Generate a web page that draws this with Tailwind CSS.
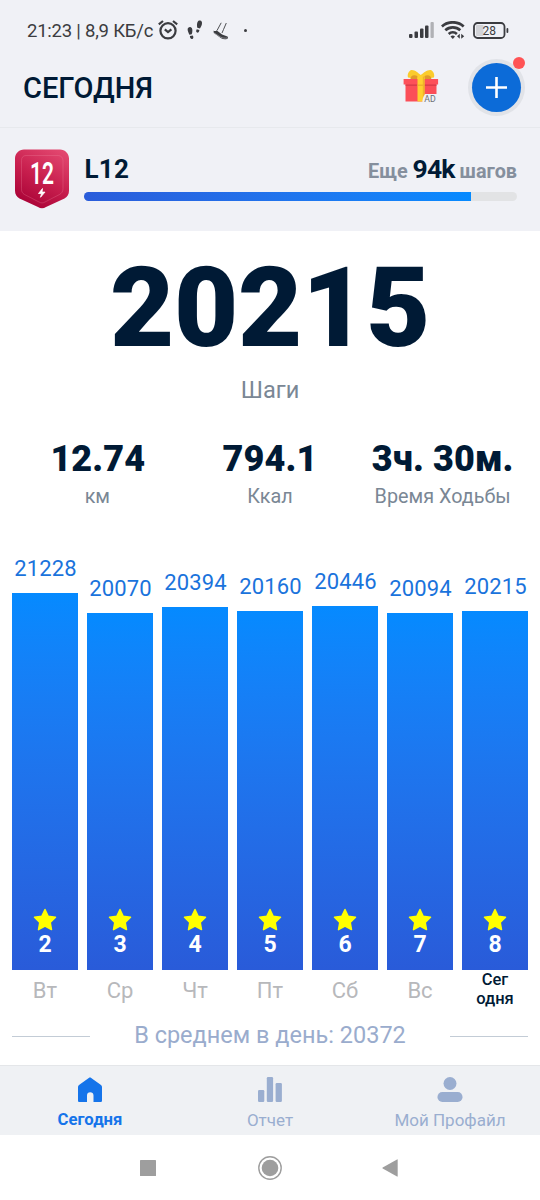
<!DOCTYPE html>
<html lang="ru">
<head>
  <meta charset="UTF-8" />
  <meta name="viewport" content="width=device-width, initial-scale=1.0"/>
  <title>Сегодня</title>
  <script src="https://cdn.jsdelivr.net/npm/@tailwindcss/browser@4"></script>
</head>
<body class="w-[540px] h-[1200px] overflow-hidden flex flex-col bg-white font-[Roboto,sans-serif] text-[#001a35]">

  <!-- Status bar -->
  <div class="h-[50px] shrink-0 bg-[#f0f1f6] flex items-center justify-between pt-3 pl-[27px] pr-[31px] text-[#3b3c40]">
    <div class="flex items-center">
      <span class="text-[18.5px] leading-none tracking-[-.22px] w-[131px] whitespace-nowrap">21:23 | 8,9 КБ/с</span>
      <svg class="w-5 h-5 -mt-0.5" viewBox="0 0 20 20" fill="none" stroke="currentColor" stroke-width="2.200">
        <circle cx="10" cy="10.8" r="7.6"/>
        <path d="M.8 4.400 5 1M19.200 4.400 15 1M6.800 9.300l3.200 2.800 3.400-2.800"/>
      </svg>
      <svg class="w-4 h-5 ml-[9px] -mt-0.5" viewBox="0 0 16 20" fill="currentColor">
        <path d="M1 8c2-2 4-.8 4.300 1.500.2 1.800-.1 3.500-.6 4.700l-2.300.5C1.500 12.500-.1 10 1 8zM2.900 16l2.900-.6c1 1.600.6 3.500-.9 3.600-1.400 0-2-1.400-2-3z"/>
        <path d="M12.200.6c2.300-.6 3.200 1.500 2.700 3.600-.4 1.800-1.200 2.900-1.900 4.200l-2.700-.7c-.6-2.700-.3-6.500 1.900-7.100zM9.800 9.300l2.600.7c-.1 1.900-1.200 2.900-2.300 2.600-1.200-.3-1.200-1.900-.3-3.300z"/>
      </svg>
      <svg class="w-4 h-[18px] ml-[10px]" viewBox="0 0 16 18">
        <path d="M.5 8.500c.9 1.200 2.500.3 3.300-.1l5.300 4.200 5.300 1.800c.9.500.8 2-.4 2.500-2 .7-4.300.3-6.300-.9L.8 10.800z" fill="currentColor"/>
        <path d="M4 8.500 8.200.8M9 11l1.500-3.500L13.300 1" stroke="currentColor" stroke-width=".9" fill="none"/>
        <path d="m.7 10.800 6.900 4.300c2 1 4.300 1.400 6.800.8" stroke="#9a9ba0" stroke-width=".8" fill="none"/>
      </svg>
      <span class="w-[3px] h-[3px] rounded-full bg-[#3b3c40] ml-[15px] -mt-0.5"></span>
    </div>
    <div class="flex items-center -mt-0.5">
      <svg class="w-[26px] h-4" viewBox="0 0 26 16" fill="currentColor">
        <rect x="0" y="12" width="3.500" height="4" rx="1"/>
        <rect x="5.500" y="9.500" width="3.500" height="6.500" rx="1"/>
        <rect x="11" y="6.500" width="3.500" height="9.500" rx="1"/>
        <rect x="16" y="3.500" width="3.500" height="12.500" rx="1"/>
        <rect x="21.500" y="0" width="3.300" height="16" rx="1" fill="#b0b1b5"/>
      </svg>
      <svg class="w-6 h-[18px] ml-[6px]" viewBox="0 0 24 18" fill="none" stroke="currentColor" stroke-width="2.700">
        <path d="M.9 5.400c6-5.500 15.800-5.500 21.800 0M4.300 9.300c4.200-3.800 10.800-3.800 15 0M7.700 12.900c2.300-2 5.900-2 8.200 0"/>
        <path d="M9.500 15.500c1.300-1.200 3.100-1.200 4.500 0l-2.200 2.400z" fill="currentColor" stroke="none"/>
        <path d="M18.800 12.800v5L16 15.300zM20.200 17.800v-5l3 2.500z" fill="currentColor" stroke="none"/>
      </svg>
      <svg class="w-9 h-[17px] ml-2" viewBox="0 0 36 17">
        <rect x="1" y="1" width="30.500" height="15" rx="3.500" fill="none" stroke="currentColor" stroke-width="1.800"/>
        <rect x="3" y="3" width="7.500" height="11" rx="1" fill="#d2d3d7"/>
        <rect x="33.500" y="6" width="1.800" height="5" rx=".9" fill="currentColor"/>
        <text x="16.200" y="12.800" text-anchor="middle" font-size="12" fill="currentColor" class="font-[Roboto,sans-serif]">28</text>
      </svg>
    </div>
  </div>

  <!-- Header -->
  <header class="h-[78px] shrink-0 bg-[#f0f1f6] border-b border-[#e7e9ed] flex items-center pl-[23px] pr-[15px] pb-[3px]">
    <h1 class="text-[29px] leading-none font-medium mt-0.5">СЕГОДНЯ</h1>
    <svg class="w-9 h-9 ml-auto mr-[29px] -mt-px" viewBox="0 0 36 36">
      <path d="M2.500 14h31v18.500h-31z" fill="#fb4e58"/>
      <path d="M.6 10h34.500v5.500H.6z" fill="#fd5059"/>
      <path d="M2.500 15.500h31v1.300h-31z" fill="#d63b48"/>
      <path d="M5 8.500C4 5 6 1.500 8.500 1 12 .7 15 4 17.800 6 20.500 4 24 .7 27.500 1c2.500.5 4.500 4 3.500 7.500L21 10h-6.500z" fill="#fbcb2c"/>
      <path d="M7.500 9.500C7.500 6.500 11 5 14.800 7.200L14 10H7.500zM28.300 9.500c0-3-3.500-4.500-7.300-2.300L22 10h6.300z" fill="#e09a2a"/>
      <path d="M14.500 6.500h7V32.500h-7z" fill="#ffd02f"/>
      <path d="M19.800 7.500h1.700v25h-1.700zM14.500 15.500h7V17h-7z" fill="#eeb32a"/>
      <path d="M22 25h13v9H19.500c-.5-3 .5-6 2.500-9z" fill="#f0f1f6"/>
      <text x="21.300" y="33" font-size="9.500" fill="#6d6f74" textLength="11.500" lengthAdjust="spacingAndGlyphs" class="font-[Roboto,sans-serif]">AD</text>
    </svg>
    <div class="relative w-[57px] h-[57px] rounded-full bg-[#e1e3e8] flex items-center justify-center">
      <div class="w-[49px] h-[49px] rounded-full bg-[#0c6bd8] flex items-center justify-center">
        <svg class="w-[21px] h-[21px]" viewBox="0 0 21 21" stroke="#fff" stroke-width="2.600"><path d="M0 10.500h21M10.500 0v21"/></svg>
      </div>
      <span class="absolute -top-0.5 right-0 w-[12px] h-[12px] rounded-full bg-[#ff5355]"></span>
    </div>
  </header>

  <!-- Level progress -->
  <section class="h-[103px] shrink-0 bg-[#f0f1f6] flex pl-[14px] pr-[23px] pt-[21px]">
    <svg class="w-[56px] h-[61px]" viewBox="0 0 56 61">
      <defs>
        <linearGradient id="badge" x1=".8" y1="0" x2=".3" y2="1">
          <stop offset="0" stop-color="#e2476f"/>
          <stop offset=".5" stop-color="#c9204f"/>
          <stop offset="1" stop-color="#a90236"/>
        </linearGradient>
      </defs>
      <path d="M10 .5h36c5 0 9 4 9 9v32c0 4-1.500 6-4.500 8L32 58c-2.500 1.600-5.500 1.600-8 0L5.500 49.500c-3-2-4.500-4-4.500-8v-32c0-5 4-9 9-9z" fill="url(#badge)"/>
      <path d="M12 6.500h32c3 0 5 2 5 5v28c0 3-1 4.500-3.500 6L31 53c-2 1.200-4 1.200-6 0l-14.500-7.500C8 44 7.500 42.500 7.500 39.500v-28c0-3 1.500-5 4.500-5z" fill="none" stroke="#f08aa3" stroke-opacity=".35" stroke-width=".8"/>
      <text x="28" y="34.500" text-anchor="middle" font-size="32" font-weight="600" fill="#fff" textLength="24" lengthAdjust="spacingAndGlyphs" class="font-[Roboto,sans-serif]">12</text>
      <path d="m28.500 39.500-4 5h3l-1 3.800 4.500-5.200h-3z" fill="#fff" stroke="#fff" stroke-width=".8"/>
    </svg>
    <div class="flex-1 ml-[13.5px]">
      <div class="flex items-baseline justify-between h-[42.5px] pt-[5px]">
        <span class="text-[26px] leading-[30px] font-bold tracking-[.3px] pl-px">L12</span>
        <span class="text-[19.8px] leading-[30px] font-bold text-[#858f9d] whitespace-nowrap">Еще <span class="text-[26.5px] tracking-[-.8px] text-[#001a35]">94k</span> шагов</span>
      </div>
      <div class="h-[9px] rounded-full bg-[#e2e3e5] overflow-hidden">
        <div class="h-full bg-linear-to-r from-[#2a5cda] to-[#058aff]" style="width: 89.4%"></div>
      </div>
    </div>
  </section>

  <!-- Today's steps -->
  <section class="h-[319px] shrink-0 flex flex-col items-center">
    <div class="text-[111px] leading-[130px] font-black tracking-[-.3px] mt-[12px]">20215</div>
    <div class="text-[23.6px] leading-7 text-[#7a8795] mt-[3px]">Шаги</div>
    <div class="w-full flex mt-[33px] px-[11px] text-center">
      <div class="flex-1">
        <div class="text-[36px] leading-[44px] font-black tracking-[.1px] pl-px">12.74</div>
        <div class="text-[19.8px] leading-6 text-[#7a8795] mt-1">км</div>
      </div>
      <div class="flex-1">
        <div class="text-[36px] leading-[44px] font-black tracking-[.1px]">794.1</div>
        <div class="text-[19.8px] leading-6 text-[#7a8795] mt-1">Ккал</div>
      </div>
      <div class="flex-1">
        <div class="text-[36px] leading-[44px] font-black tracking-[.1px] whitespace-nowrap">3ч. 30м.</div>
        <div class="text-[19.8px] leading-6 text-[#7a8795] mt-1">Время Ходьбы</div>
      </div>
    </div>
  </section>

  <!-- Week chart -->
  <section id="chart" class="h-[419.5px] shrink-0 flex items-end gap-[9px] px-3">
    <!-- dynamic render -->
  </section>
  <section id="days" class="h-[40.5px] shrink-0 flex gap-[9px] px-3 text-center">
    <!-- dynamic render -->
  </section>

  <!-- Average -->
  <div class="h-[55px] shrink-0 flex items-center justify-between px-3 pb-[3px]">
    <span class="w-[78px] h-px bg-[#c3ccd6]"></span>
    <span class="text-[23.5px] leading-none text-[#9aaccd]">В среднем в день: 20372</span>
    <span class="w-[78px] h-px bg-[#c3ccd6]"></span>
  </div>

  <!-- Tabs -->
  <nav class="h-[70px] shrink-0 bg-[#eff1f4] border-t border-[#e4e6e9] flex text-[17px] leading-5 text-[#9aaed0]">
    <div class="flex-1 flex flex-col items-center pt-[11px] text-[#1574ea]">
      <svg class="w-6 h-[26px]" viewBox="0 0 24 26" fill="currentColor">
        <path d="M10.800.9c.8-.6 1.600-.6 2.400 0l9.800 7c.7.500 1 1.200 1 2v13.600c0 1-.6 1.500-1.500 1.500h-7v-6.500c0-2-1.400-3.200-3.300-3.200S9 16.500 9 18.500V25H1.500C.6 25 0 24.500 0 23.500V9.900c0-.8.3-1.500 1-2z"/>
      </svg>
      <span class="font-bold text-[16.700px] mt-[7px]">Сегодня</span>
    </div>
    <div class="flex-1 flex flex-col items-center pt-[11px]">
      <svg class="w-6 h-[26px]" viewBox="0 0 24 26" fill="currentColor">
        <rect x="0" y="13" width="6.300" height="12" rx="1.200"/>
        <rect x="8.800" y="0" width="6.300" height="25" rx="1.200"/>
        <rect x="17.600" y="6" width="6.300" height="19" rx="1.200"/>
      </svg>
      <span class="mt-[7px]">Отчет</span>
    </div>
    <div class="flex-1 flex flex-col items-center pt-[11px]">
      <svg class="w-[26px] h-[26px]" viewBox="0 0 26 26" fill="currentColor">
        <circle cx="13" cy="6.500" r="6.500"/>
        <rect x=".5" y="15" width="25" height="10" rx="4.800"/>
      </svg>
      <span class="mt-[7px] whitespace-nowrap">Мой Профайл</span>
    </div>
  </nav>

  <!-- System navigation -->
  <div class="flex-1 flex items-center justify-center pr-0.5 text-[#9e9e9e]">
    <svg class="w-4 h-4" viewBox="0 0 16 16" fill="currentColor"><rect width="16" height="16" rx=".6"/></svg>
    <svg class="w-6 h-6 ml-[102px]" viewBox="0 0 24 24" fill="currentColor">
      <circle cx="12" cy="12" r="11.200" fill="none" stroke="currentColor" stroke-width="1.400"/>
      <circle cx="12" cy="12" r="8.300"/>
    </svg>
    <svg class="w-4 h-[18px] ml-[100px]" viewBox="0 0 16 18" fill="currentColor"><path d="M15 .4c.4-.2.700 0 .700.500v16.200c0 .5-.3.700-.7.500L.7 9.500c-.5-.3-.5-.7 0-1z"/></svg>
  </div>

  <script>
    const week = [
      { day: "Вт", date: 2, steps: 21228 },
      { day: "Ср", date: 3, steps: 20070 },
      { day: "Чт", date: 4, steps: 20394 },
      { day: "Пт", date: 5, steps: 20160 },
      { day: "Сб", date: 6, steps: 20446 },
      { day: "Вс", date: 7, steps: 20094 },
      { day: "Сег<br>одня", date: 8, steps: 20215, today: true },
    ];
    const maxSteps = 21228;
    const maxHeight = 377;

    const chart = document.getElementById("chart");
    const days = document.getElementById("days");

    week.forEach(item => {
      const height = item.steps / maxSteps * maxHeight;
      const col = document.createElement("div");
      col.className = "w-[66px] flex flex-col items-center";
      col.innerHTML = `
        <span class="text-[22px] leading-6 mb-[12px] pl-px tracking-[.1px] text-[#1a73dc]">${item.steps}</span>
        <div class="w-full flex flex-col items-center justify-end pb-[12px] bg-linear-to-b from-[#058aff] to-[#295bd9]" style="height: ${height}px">
          <svg class="w-6 h-[23px]" viewBox="0 0 24 23" fill="#ffff00" stroke="#ffff00" stroke-width="1.500" stroke-linejoin="round">
            <path d="m12 1.500 3.200 6.700 7.300 1-5.300 5.200 1.300 7.200L12 18.200l-6.500 3.400 1.300-7.200L1.500 9.200l7.300-1z"/>
          </svg>
          <span class="text-[23px] leading-[27px] font-bold text-white">${item.date}</span>
        </div>
      `;
      chart.appendChild(col);

      const label = document.createElement("div");
      label.className = item.today
        ? "w-[66px] text-[16.5px] leading-[19.5px] font-medium"
        : "w-[66px] text-[22px] leading-[42px] text-[#b7b8bb]";
      label.innerHTML = item.day;
      days.appendChild(label);
    });
  </script>
</body>
</html>
